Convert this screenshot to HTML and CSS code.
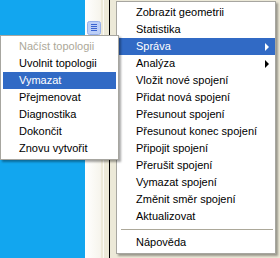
FILE: index.html
```html
<!DOCTYPE html>
<html>
<head>
<meta charset="utf-8">
<link rel="stylesheet" href="styles.css">
</head>
<body>
<div class="desk">
  <div class="blue"></div>
  <div class="strip"></div>
  <div class="beige1"></div>
  <div class="white1"></div>
  <div class="beige2"></div>
  <div class="black"></div>
  <div class="beige3"></div>
</div>
<div class="icon">
  <svg width="14" height="14" viewBox="0 0 14 14">
    <rect x="0.5" y="0.5" width="13" height="13" rx="2" fill="#bccff7" stroke="#94aeea"/>
    <rect x="4" y="3" width="6" height="1" fill="#3a63cf"/>
    <rect x="4" y="5" width="6" height="1" fill="#3a63cf"/>
    <rect x="4" y="7" width="6" height="1" fill="#3a63cf"/>
    <rect x="4" y="9" width="6" height="1" fill="#3a63cf"/>
  </svg>
</div>
<div class="menu main">
  <div class="item">Zobrazit geometrii</div>
  <div class="item">Statistika</div>
  <div class="item sel">Správa<span class="arrow"></span></div>
  <div class="item">Analýza<span class="arrow"></span></div>
  <div class="item">Vložit nové spojení</div>
  <div class="item">Přidat nová spojení</div>
  <div class="item">Přesunout spojení</div>
  <div class="item">Přesunout konec spojení</div>
  <div class="item">Připojit spojení</div>
  <div class="item">Přerušit spojení</div>
  <div class="item">Vymazat spojení</div>
  <div class="item">Změnit směr spojení</div>
  <div class="item">Aktualizovat</div>
  <div class="sep"></div>
  <div class="item">Nápověda</div>
</div>
<div class="menu sub">
  <div class="item dis">Načíst topologii</div>
  <div class="item">Uvolnit topologii</div>
  <div class="item sel">Vymazat</div>
  <div class="item">Přejmenovat</div>
  <div class="item">Diagnostika</div>
  <div class="item">Dokončit</div>
  <div class="item">Znovu vytvořit</div>
</div>
</body>
</html>
```

FILE: styles.css
```css
html, body {
  margin: 0;
  padding: 0;
}
body {
  width: 280px;
  height: 258px;
  overflow: hidden;
  position: relative;
  font-family: "Liberation Sans", Arial, sans-serif;
  font-size: 11px;
}
.desk {
  display: flex;
  height: 258px;
}
.blue { width: 85px; background: #12a6ef; }
.strip { width: 16px; background: linear-gradient(to right, #ffffff, #f6f4ec); }
.beige1 { width: 2px; background: #ece9d8; }
.white1 { width: 1px; background: #fbfaf6; }
.beige2 { width: 5px; background: #ece9d8; }
.black { width: 1px; background: #000; }
.beige3 { flex: 1; background: #ece9d8; }

.icon {
  position: absolute;
  left: 87px;
  top: 21px;
  width: 14px;
  height: 14px;
}
.icon svg { display: block; }

.menu {
  position: absolute;
  background: #fff;
  border: 1px solid #a7a6a0;
  box-shadow: 2px 2px 2px rgba(0,0,0,0.35);
  padding: 2px;
  box-sizing: border-box;
}
.main {
  left: 116px;
  top: 1px;
  width: 160px;
  padding-right: 0;
}
.sub {
  left: 0;
  top: 35px;
  width: 119px;
}
.item {
  height: 17px;
  line-height: 17px;
  white-space: nowrap;
  color: #000;
  position: relative;
}
.main .item { padding-left: 17px; }
.sub .item { padding-left: 16px; }
.item.sel {
  background: #316ac5;
  color: #fff;
}
.item.dis { color: #aca899; }
.arrow {
  position: absolute;
  left: 146px;
  top: 5px;
  width: 0;
  height: 0;
  border-top: 4px solid transparent;
  border-bottom: 4px solid transparent;
  border-left: 4px solid #000;
}
.sel .arrow { border-left-color: #fff; }
.sep {
  height: 1px;
  margin: 4px 2px 4px 2px;
  background: #aca899;
}
```
